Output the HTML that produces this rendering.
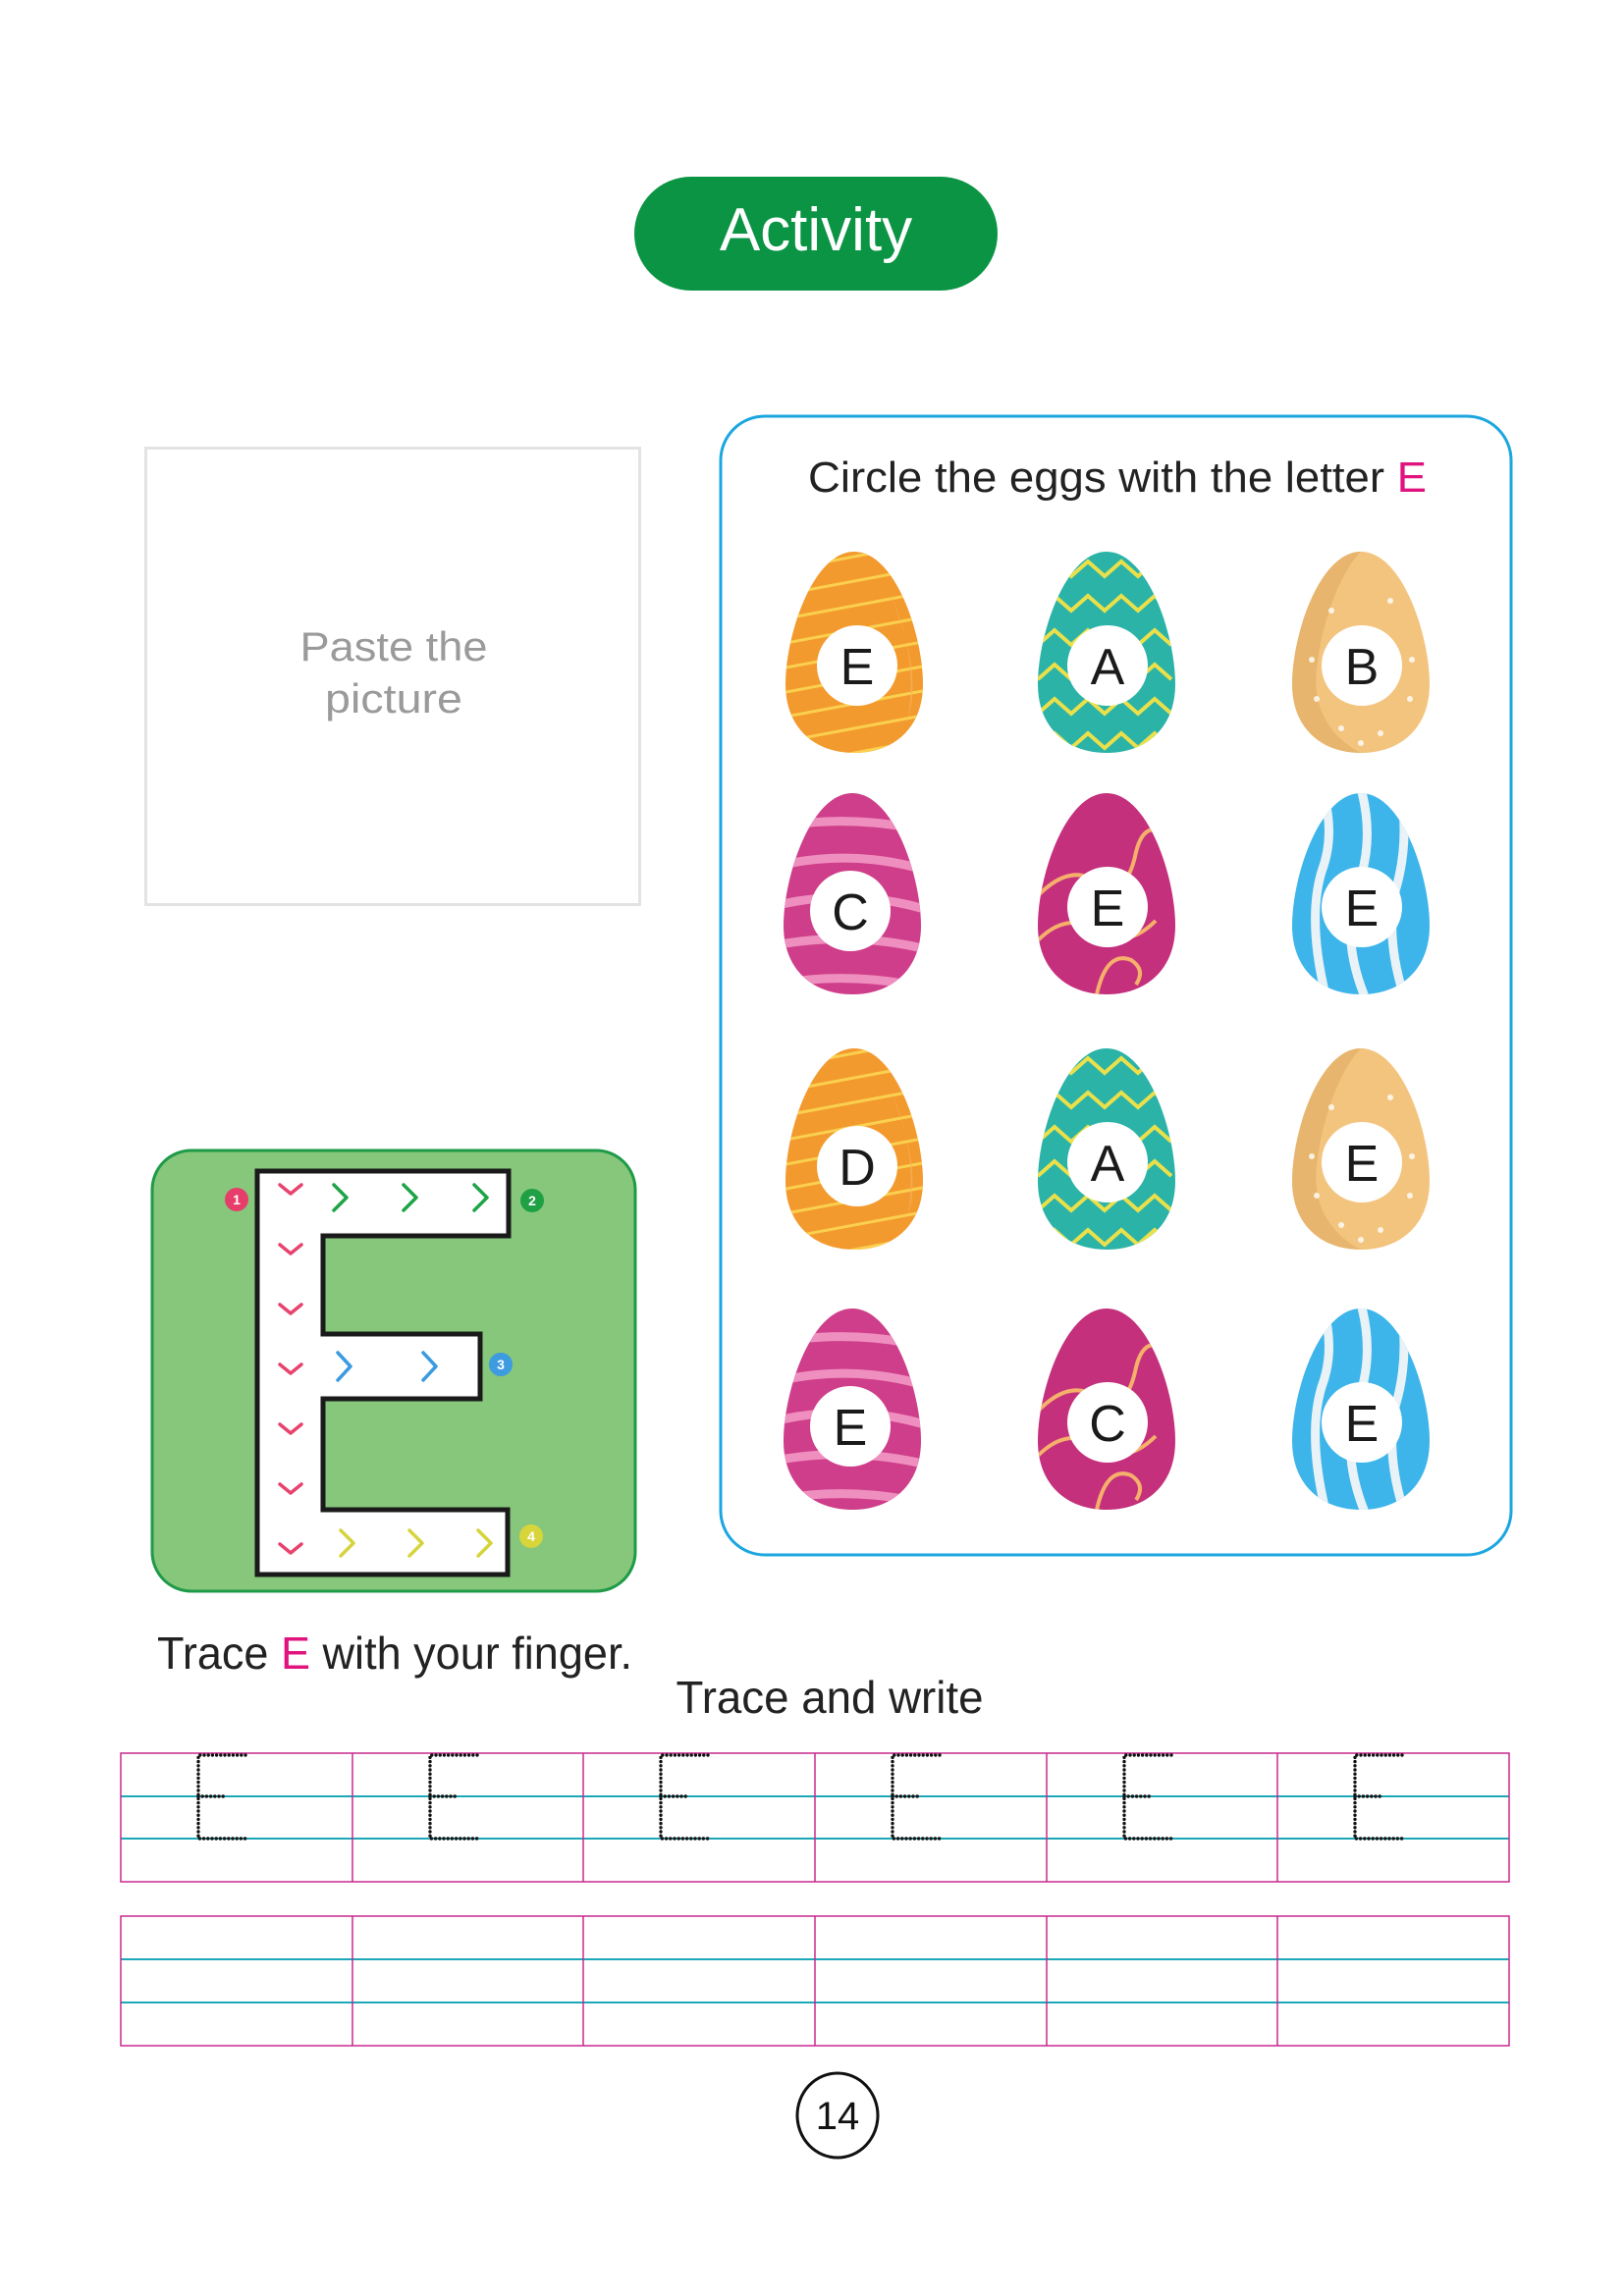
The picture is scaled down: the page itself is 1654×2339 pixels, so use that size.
<!DOCTYPE html>
<html><head><meta charset="utf-8"><style>
html,body{margin:0;padding:0;background:#fff}
svg{display:block}
text{font-family:"Liberation Sans",sans-serif}
</style></head><body>
<svg width="1654" height="2339" viewBox="0 0 1654 2339" xmlns="http://www.w3.org/2000/svg">
<defs>
<path id="egg" d="M70,0 C28,0 0,85 0,135 C0,180 30,205 70,205 C110,205 140,180 140,135 C140,85 112,0 70,0 Z"/>
<clipPath id="ec"><use href="#egg"/></clipPath>
<g id="e1"><use href="#egg" fill="#f39a2e"/><g clip-path="url(#ec)" stroke="#fad04e" stroke-width="3" fill="none">
<path d="M-10,20 L150,-10 M-10,45 L150,15 M-10,70 L150,40 M-10,95 L150,65 M-10,120 L150,90 M-10,145 L150,115 M-10,170 L150,140 M-10,195 L150,165 M-10,220 L150,190"/></g>
<path d="M105,40 Q135,100 125,170 Q140,120 105,40Z" fill="#f8b460" opacity=".6"/></g>
<g id="e2"><use href="#egg" fill="#2bb3a8"/><g clip-path="url(#ec)" stroke="#ebe04a" stroke-width="4" fill="none">
<path d="M0,25 l17,-15 17,15 17,-15 17,15 17,-15 17,15 17,-15 17,15"/>
<path d="M0,60 l17,-15 17,15 17,-15 17,15 17,-15 17,15 17,-15 17,15"/>
<path d="M0,95 l17,-15 17,15 17,-15 17,15 17,-15 17,15 17,-15 17,15"/>
<path d="M0,130 l17,-15 17,15 17,-15 17,15 17,-15 17,15 17,-15 17,15"/>
<path d="M0,165 l17,-15 17,15 17,-15 17,15 17,-15 17,15 17,-15 17,15"/>
<path d="M0,200 l17,-15 17,15 17,-15 17,15 17,-15 17,15 17,-15 17,15"/></g></g>
<g id="e3"><use href="#egg" fill="#f3c47e"/><path d="M70,0 C28,0 0,85 0,135 C0,180 30,205 70,205 C40,190 20,160 25,120 C30,70 50,20 70,0Z" fill="#e0ac63" opacity=".6"/>
<g fill="#fff" opacity=".8"><circle cx="40" cy="60" r="3"/><circle cx="100" cy="50" r="3"/><circle cx="20" cy="110" r="3"/><circle cx="122" cy="110" r="3"/><circle cx="25" cy="150" r="3"/><circle cx="120" cy="150" r="3"/><circle cx="50" cy="180" r="3"/><circle cx="90" cy="185" r="3"/><circle cx="70" cy="195" r="3"/></g></g>
<g id="e4"><use href="#egg" fill="#cf3e8a"/><g clip-path="url(#ec)" stroke="#ee8fbf" stroke-width="9" fill="none">
<path d="M-10,35 Q70,20 150,40 M-10,75 Q70,55 150,80 M-10,115 Q70,95 150,120 M-10,155 Q70,140 150,160 M-10,195 Q70,180 150,200"/></g></g>
<g id="e5"><use href="#egg" fill="#c4307c"/><g clip-path="url(#ec)" stroke="#f5b06c" stroke-width="4" fill="none">
<path d="M-5,110 Q30,70 60,90 Q90,110 100,60 Q110,20 140,50"/><path d="M0,150 Q30,120 60,140 Q90,160 120,130"/><path d="M60,205 Q70,160 95,170 Q110,180 100,195"/></g></g>
<g id="e6"><use href="#egg" fill="#3db5ea"/><g clip-path="url(#ec)" stroke="#e9f2f7" stroke-width="9" fill="none">
<path d="M30,-5 Q45,40 30,80 Q15,130 35,210 M70,-5 Q85,50 65,100 Q50,150 75,210 M110,-5 Q120,50 105,100 Q95,150 115,210"/></g></g>
</defs>

<rect x="646" y="180" width="370" height="116" rx="58" fill="#0a9443"/>
<text x="831" y="255" font-size="62" fill="#fff" text-anchor="middle">Activity</text>

<rect x="148.5" y="456.5" width="503" height="465" fill="none" stroke="#e3e3e3" stroke-width="3"/>
<text x="401" y="673" font-size="42" fill="#9a9a9a" text-anchor="middle" textLength="191" lengthAdjust="spacingAndGlyphs">Paste the</text>
<text x="401" y="726" font-size="42" fill="#9a9a9a" text-anchor="middle" textLength="140" lengthAdjust="spacingAndGlyphs">picture</text>

<rect x="734" y="424" width="805" height="1160" rx="45" fill="none" stroke="#1ba6e0" stroke-width="3"/>
<text x="823" y="501" font-size="44" fill="#222" textLength="630" lengthAdjust="spacingAndGlyphs">Circle the eggs with the letter <tspan fill="#e0137f">E</tspan></text>

<g font-size="52" fill="#1a1a1a" text-anchor="middle">
<g transform="translate(800,562)"><use href="#e1"/><circle cx="73" cy="116" r="41" fill="#fff"/><text x="73" y="135">E</text></g>
<g transform="translate(1057,562)"><use href="#e2"/><circle cx="71" cy="116" r="41" fill="#fff"/><text x="71" y="135">A</text></g>
<g transform="translate(1316,562)"><use href="#e3"/><circle cx="71" cy="116" r="41" fill="#fff"/><text x="71" y="135">B</text></g>

<g transform="translate(798,808)"><use href="#e4"/><circle cx="68" cy="120" r="41" fill="#fff"/><text x="68" y="139">C</text></g>
<g transform="translate(1057,808)"><use href="#e5"/><circle cx="71" cy="116" r="41" fill="#fff"/><text x="71" y="135">E</text></g>
<g transform="translate(1316,808)"><use href="#e6"/><circle cx="71" cy="116" r="41" fill="#fff"/><text x="71" y="135">E</text></g>

<g transform="translate(800,1068)"><use href="#e1"/><circle cx="73" cy="120" r="41" fill="#fff"/><text x="73" y="139">D</text></g>
<g transform="translate(1057,1068)"><use href="#e2"/><circle cx="71" cy="116" r="41" fill="#fff"/><text x="71" y="135">A</text></g>
<g transform="translate(1316,1068)"><use href="#e3"/><circle cx="71" cy="116" r="41" fill="#fff"/><text x="71" y="135">E</text></g>

<g transform="translate(798,1333)"><use href="#e4"/><circle cx="68" cy="120" r="41" fill="#fff"/><text x="68" y="139">E</text></g>
<g transform="translate(1057,1333)"><use href="#e5"/><circle cx="71" cy="116" r="41" fill="#fff"/><text x="71" y="135">C</text></g>
<g transform="translate(1316,1333)"><use href="#e6"/><circle cx="71" cy="116" r="41" fill="#fff"/><text x="71" y="135">E</text></g>
</g>

<rect x="155" y="1172" width="492" height="449" rx="40" fill="#86c77b" stroke="#1f9a48" stroke-width="3"/>
<polygon points="262,1193 518,1193 518,1259 329,1259 329,1359 489,1359 489,1425 329,1425 329,1538 517,1538 517,1604 262,1604" fill="#fff" stroke="#1a1a1a" stroke-width="5"/>
<g fill="none" stroke-width="3.5" stroke-linecap="round" stroke-linejoin="round">
<g stroke="#e8436e"><path d="M285,1207 l11,9 11,-9"/><path d="M285,1268 l11,9 11,-9"/><path d="M285,1329 l11,9 11,-9"/><path d="M285,1390 l11,9 11,-9"/><path d="M285,1451 l11,9 11,-9"/><path d="M285,1512 l11,9 11,-9"/><path d="M285,1573 l11,9 11,-9"/></g>
<g stroke="#1ea447"><path d="M340,1207 l13,13 -13,13"/><path d="M411,1207 l13,13 -13,13"/><path d="M483,1207 l13,13 -13,13"/></g>
<g stroke="#3c9be0"><path d="M344,1378 l13,14 -13,14"/><path d="M431,1378 l13,14 -13,14"/></g>
<g stroke="#d6d43c"><path d="M347,1559 l13,13 -13,13"/><path d="M417,1559 l13,13 -13,13"/><path d="M487,1559 l13,13 -13,13"/></g>
</g>
<g font-size="14" font-weight="bold" fill="#fff" text-anchor="middle">
<circle cx="241" cy="1222" r="12" fill="#e63d6b"/><text x="241" y="1227">1</text>
<circle cx="542" cy="1223" r="12" fill="#1fa045"/><text x="542" y="1228">2</text>
<circle cx="510" cy="1390" r="12" fill="#3d9be0"/><text x="510" y="1395">3</text>
<circle cx="541" cy="1565" r="12" fill="#d8d53a"/><text x="541" y="1570">4</text>
</g>

<text x="160" y="1700" font-size="46" fill="#222" textLength="484" lengthAdjust="spacingAndGlyphs">Trace <tspan fill="#e0137f">E</tspan> with your finger.</text>
<text x="845" y="1745" font-size="46" fill="#222" text-anchor="middle" textLength="313" lengthAdjust="spacingAndGlyphs">Trace and write</text>

<g fill="none">
<g stroke="#1ca8b8" stroke-width="2"><path d="M123,1830H1537M123,1873H1537M123,1996H1537M123,2040H1537"/></g>
<g stroke="#c8288e" stroke-width="1.5">
<rect x="123" y="1786" width="1414" height="131"/><rect x="123" y="1952" width="1414" height="132"/>
<path d="M359,1786V1917M594,1786V1917M830,1786V1917M1066,1786V1917M1301,1786V1917"/>
<path d="M359,1952V2084M594,1952V2084M830,1952V2084M1066,1952V2084M1301,1952V2084"/>
</g>
<g stroke="#111" stroke-width="3.4" stroke-linecap="round" stroke-dasharray="0 4.2">
<path id="te" d="M250,1788H202V1873H250M202,1830H230"/>
<use href="#te" x="236"/><use href="#te" x="471"/><use href="#te" x="707"/><use href="#te" x="943"/><use href="#te" x="1178"/>
</g>
<ellipse cx="853" cy="2155" rx="41" ry="43" stroke="#111" stroke-width="3"/>
</g>
<text x="853" y="2169" font-size="40" fill="#111" text-anchor="middle">14</text>
</svg>
</body></html>
